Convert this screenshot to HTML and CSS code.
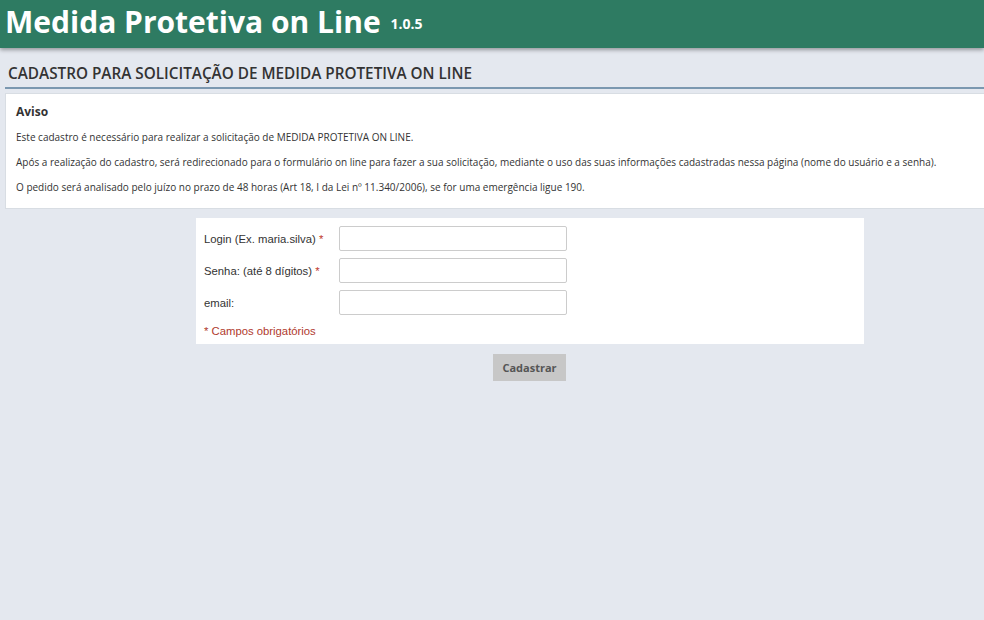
FILE: index.html
```html
<!DOCTYPE html>
<html lang="pt-BR">
<head>
  <meta charset="UTF-8">
  <title>Medida Protetiva on Line</title>
  <link rel="stylesheet" href="styles.css">
</head>
<body>
  <header class="topbar">
    <h1>Medida Protetiva on Line <small>1.0.5</small></h1>
  </header>

  <div class="page">
    <h2 class="page-title">CADASTRO PARA SOLICITAÇÃO DE MEDIDA PROTETIVA ON LINE</h2>

    <div class="notice">
      <h3>Aviso</h3>
      <p>Este cadastro é necessário para realizar a solicitação de MEDIDA PROTETIVA ON LINE.</p>
      <p>Após a realização do cadastro, será redirecionado para o formulário on line para fazer a sua solicitação, mediante o uso das suas informações cadastradas nessa página (nome do usuário e a senha).</p>
      <p>O pedido será analisado pelo juízo no prazo de 48 horas (Art 18, I da Lei nº 11.340/2006), se for uma emergência ligue 190.</p>
    </div>

    <form class="signup">
      <div class="fields">
        <div class="row">
          <label for="login">Login (Ex. maria.silva) <span class="req">*</span></label>
          <input type="text" id="login" autofocus>
        </div>
        <div class="row">
          <label for="senha">Senha: (até 8 dígitos) <span class="req">*</span></label>
          <input type="password" id="senha">
        </div>
        <div class="row">
          <label for="email">email:</label>
          <input type="text" id="email">
        </div>
        <div class="hint">* Campos obrigatórios</div>
      </div>
      <div class="actions">
        <button type="button" class="btn">Cadastrar</button>
      </div>
    </form>
  </div>
</body>
</html>
```

FILE: styles.css
```css
body {
  margin: 0;
  background: #e4e8ef;
  font-family: 'Open Sans', sans-serif;
  color: #333;
}

.topbar {
  background: #2e7b62;
  height: 48px;
  box-shadow: 0 2px 4px rgba(0, 0, 0, 0.35);
  display: flex;
  align-items: center;
  padding-left: 5px;
}
.topbar h1 {
  margin: 0;
  color: #fff;
  font-size: 30px;
  font-weight: 700;
  line-height: 1;
  position: relative;
  top: -2px;
}
.topbar small {
  font-size: 14px;
  margin-left: 2px;
  position: relative;
  top: -4px;
}

.page {
  padding: 14px 0 0 5px;
}

.page-title {
  margin: 0;
  font-size: 15.3px;
  font-weight: 600;
  color: #333;
  padding: 1px 3px 4px;
  border-bottom: 2px solid #7b98b0;
}

.notice {
  background: #fff;
  border: 1px solid #d8dde3;
  border-right: none;
  margin-top: 4px;
  padding: 9px 10px 3px;
}
.notice h3 {
  margin: 0 0 10px;
  font-size: 12px;
  font-weight: 700;
  color: #333;
}
.notice p {
  margin: 0 0 10px;
  font-size: 10px;
  line-height: 15px;
  color: #333;
}

.signup {
  width: 668px;
  margin: 9px 0 0 191px;
}
.fields {
  background: #fff;
  padding: 8px 8px 7px;
}
.row {
  display: flex;
  align-items: center;
  margin-bottom: 7px;
}
.row label {
  width: 135px;
  font-family: 'Liberation Sans', Arial, sans-serif;
  font-size: 11.3px;
  color: #333;
}
.req {
  color: #c0392b;
}
.row input {
  width: 228px;
  height: 25px;
  box-sizing: border-box;
  border: 1px solid #ccc;
  border-radius: 2px;
  padding: 0 8px;
  margin: 0;
  outline: none;
}
.hint {
  font-family: 'Liberation Sans', Arial, sans-serif;
  font-size: 11.3px;
  color: #b03a2e;
  margin-top: 10px;
}

.actions {
  padding: 10px 0 0 297px;
}
.btn {
  background: #c7c7c7;
  border: none;
  width: 73px;
  height: 27px;
  font-family: 'Open Sans', sans-serif;
  font-size: 11px;
  font-weight: 700;
  color: #555;
  padding: 0;
}
```
